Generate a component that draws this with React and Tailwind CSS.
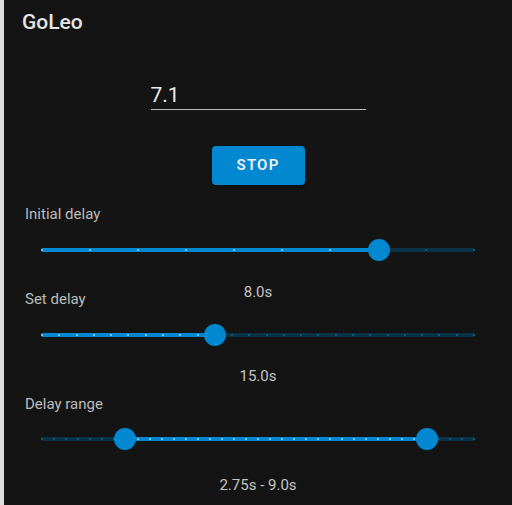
import React from "react";

function Slider({ steps, values }) {
  const range = values.length === 2;
  const lo = range ? values[0] : 0;
  const hi = range ? values[1] : values[0];
  const pct = (i) => (i / steps) * 100;
  const dots = Array.from({ length: steps + 1 }, (_, i) => i);
  return (
    <div className="relative mx-[37px] h-[22px]">
      <div className="absolute inset-x-0 top-[9px] h-[4px] rounded-full bg-[#0a3246]" />
      <div
        className="absolute top-[9px] h-[4px] rounded-full bg-[#0288d1]"
        style={{ left: `${pct(lo)}%`, width: `${pct(hi - lo)}%` }}
      />
      <div className="absolute inset-x-[1px] top-[10px] h-[2px]">
        {dots.map((i) => {
          const active = i >= lo && i <= hi;
          return (
            <div
              key={i}
              className={
                active
                  ? "absolute top-0 h-[2px] w-[2px] -translate-x-1/2 rounded-full bg-[#9fd4f2]"
                  : "absolute top-0 h-[2px] w-[2px] -translate-x-1/2 rounded-full bg-[#0b6a9c]"
              }
              style={{ left: `${pct(i)}%` }}
            />
          );
        })}
      </div>
      {values.map((v, k) => (
        <div
          key={k}
          className="absolute top-0 h-[22px] w-[22px] -translate-x-1/2 rounded-full bg-[#0288d1]"
          style={{ left: `${pct(v)}%` }}
        />
      ))}
    </div>
  );
}

export default function App() {
  return (
    <div
      className="flex h-[505px] w-[512px] overflow-hidden"
      style={{ fontFamily: "Roboto, 'Liberation Sans', sans-serif" }}
    >
      <div className="w-[4px] shrink-0 bg-[#dedede]" />
      <div className="flex flex-1 flex-col bg-[#141414]">
        <div className="pl-[18px] pt-[8px] text-[21px] font-medium leading-[28px] text-[#e4e4e4]">
          GoLeo
        </div>

        <div className="mt-[46px] flex justify-center">
          <div className="w-[215px] border-b border-[#bdbdbd] text-[21px] leading-[27px] text-[#ececec]">
            7.1
          </div>
        </div>

        <div className="mt-[36px] flex justify-center">
          <button className="flex h-[39px] w-[93px] items-center justify-center rounded-[4px] bg-[#0288d1] text-[15px] font-semibold tracking-[0.08em] text-[#f2f2f2] shadow-[0_2px_3px_rgba(0,0,0,0.4)]">
            STOP
          </button>
        </div>

        <div className="mt-[19px] pl-[21px] text-[15px] leading-[20px] text-[#bcbcbc]">
          Initial delay
        </div>
        <div className="mt-[15px]">
          <Slider steps={9} values={[7]} />
        </div>
        <div className="mt-[21px] text-center text-[15px] leading-[20px] text-[#c4c4c4]">
          8.0s
        </div>

        <div className="mt-[-13px] pl-[21px] text-[15px] leading-[20px] text-[#bcbcbc]">
          Set delay
        </div>
        <div className="mt-[15px]">
          <Slider steps={25} values={[10]} />
        </div>
        <div className="mt-[20px] text-center text-[15px] leading-[20px] text-[#c4c4c4]">
          15.0s
        </div>

        <div className="mt-[8px] pl-[21px] text-[15px] leading-[20px] text-[#bcbcbc]">
          Delay range
        </div>
        <div className="mt-[14px]">
          <Slider steps={36} values={[7, 32]} />
        </div>
        <div className="mt-[25px] text-center text-[15px] leading-[20px] text-[#c4c4c4]">
          2.75s - 9.0s
        </div>
      </div>
    </div>
  );
}
